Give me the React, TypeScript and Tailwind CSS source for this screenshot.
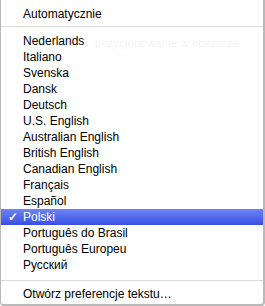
import React from "react";

const langs = [
  "Nederlands",
  "Italiano",
  "Svenska",
  "Dansk",
  "Deutsch",
  "U.S. English",
  "Australian English",
  "British English",
  "Canadian English",
  "Français",
  "Español",
  "Polski",
  "Português do Brasil",
  "Português Europeu",
  "Русский",
];

function Row({ label, selected }: { label: string; selected?: boolean }) {
  return (
    <div
      className={
        selected
          ? "relative h-[16px] flex items-center pl-[22px] text-white bg-gradient-to-b from-[#6f83f3] to-[#3a4ee6]"
          : "relative h-[16px] flex items-center pl-[22px] text-black"
      }
    >
      {selected && (
        <span className="absolute left-[7px] top-0 h-[16px] flex items-center text-[12px] font-bold">✓</span>
      )}
      <span className="leading-[16px]">{label}</span>
    </div>
  );
}

export default function App() {
  return (
    <div
      className="relative w-[265px] h-[306px] bg-white overflow-hidden text-[12px]"
      style={{ fontFamily: '"Liberation Sans", Arial, sans-serif' }}
    >
      <div className="absolute inset-0 border-l border-r-2 border-b-2 border-[#b9b9b9] rounded-b-[4px] pointer-events-none" />
      <div className="absolute left-[95px] top-[35px] text-[11px] text-[#f3f3f3] tracking-wide">
        pozycjonowanie w obszarze
      </div>
      <div className="relative flex flex-col pt-[6px] pr-[2px] pl-[1px]">
        <Row label="Automatycznie" />
        <div className="h-[11px] flex flex-col pt-[4px]">
          <div className="h-[1px] bg-[#d9d9d9]" />
        </div>
        {langs.map((l) => (
          <Row key={l} label={l} selected={l === "Polski"} />
        ))}
        <div className="h-[13px] flex flex-col pt-[7px]">
          <div className="h-[1px] bg-[#d9d9d9]" />
        </div>
        <Row label="Otwórz preferencje tekstu…" />
      </div>
    </div>
  );
}
